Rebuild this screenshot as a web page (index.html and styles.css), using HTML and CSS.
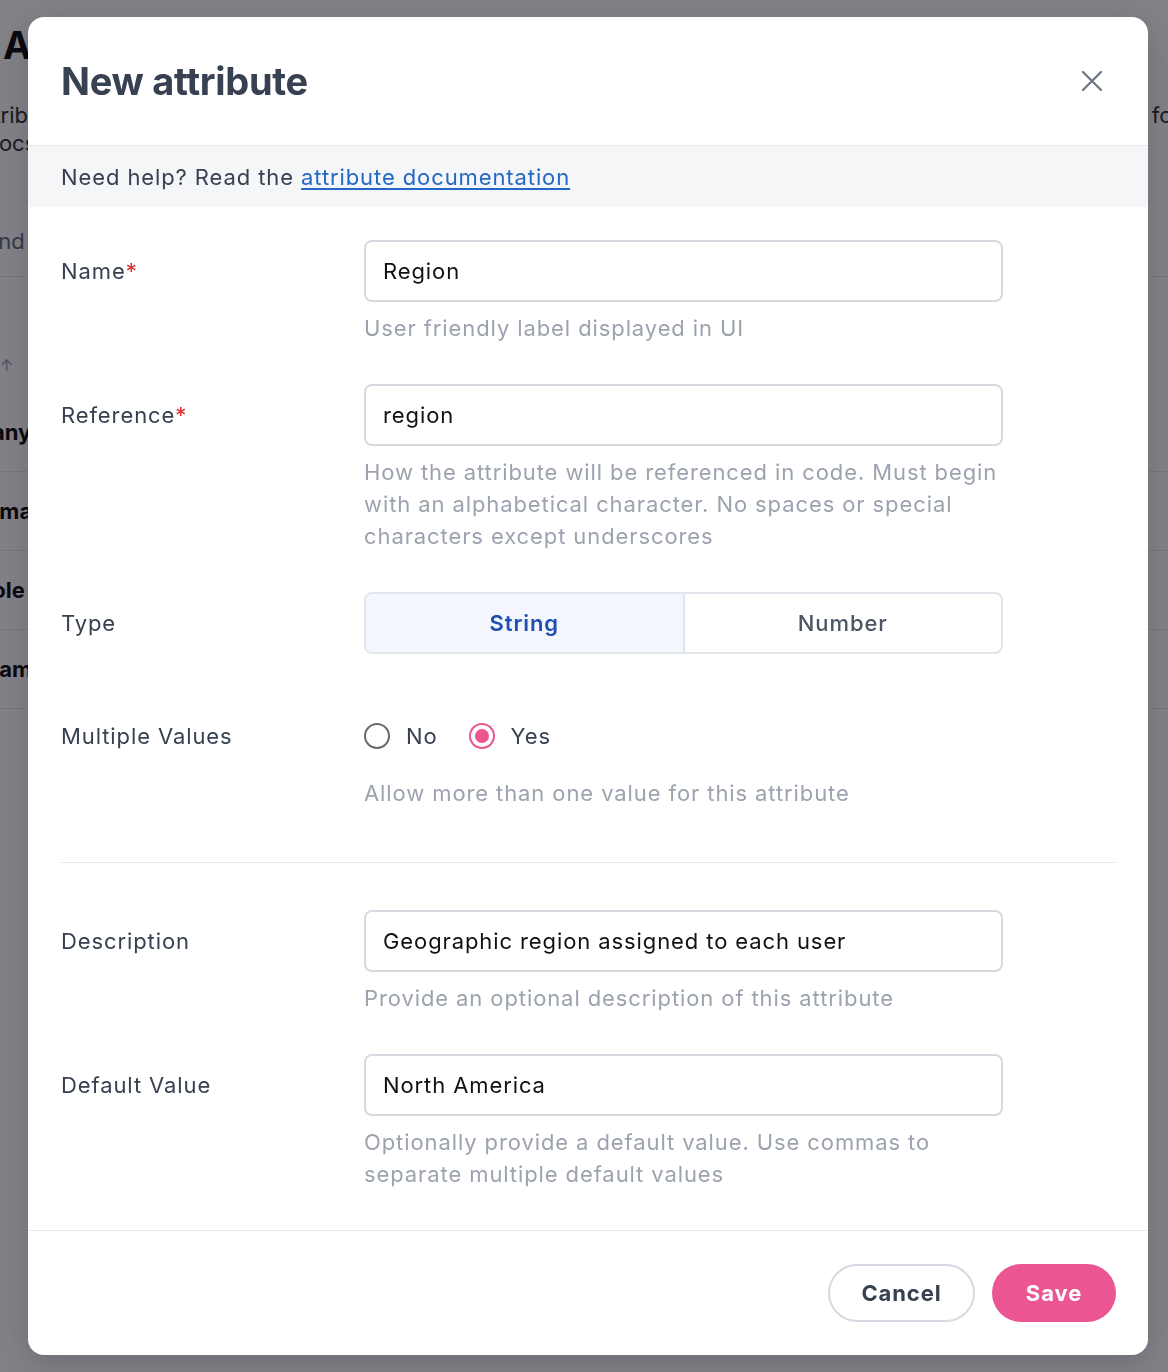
FILE: index.html
```html
<!DOCTYPE html>
<html lang="en">
<head>
    <meta charset="UTF-8">
    <meta name="viewport" content="width=device-width, initial-scale=1.0">
    <title>New attribute</title>
    <link rel="stylesheet" href="styles.css">
</head>
<body>
    <!-- Page behind the dialog -->
    <div class="page">
        <h1 class="page-title">Attributes</h1>
        <p class="page-intro">Attributes describe the users of your workspace and can be used to segment, target and personalise the product for each of them, from onboarding to</p>
        <p class="page-intro second">Docs and examples are available in the help centre for you to read</p>
        <div class="page-search"><span>Find an attribute</span></div>
        <div class="page-sort">↑</div>
        <div class="page-row company"><span>Company</span></div>
        <div class="page-row email"><span>Email</span></div>
        <div class="page-row role"><span>Role</span></div>
        <div class="page-row team"><span>Team</span></div>
    </div>

    <div class="overlay">
        <div class="modal">
            <header class="modal-header">
                <h2>New attribute</h2>
                <button class="close-btn" aria-label="Close">
                    <svg width="22" height="22" viewBox="0 0 22 22" fill="none" stroke="#6b7280" stroke-width="2.2" stroke-linecap="round">
                        <path d="M2 2 L20 20 M20 2 L2 20"/>
                    </svg>
                </button>
            </header>

            <div class="modal-help">
                <span>Need help? Read the <a href="#">attribute documentation</a></span>
            </div>

            <div class="modal-body">
                <div class="field">
                    <label class="field-label" for="name">Name<span class="req">*</span></label>
                    <div class="field-control">
                        <input class="text-input" id="name" type="text" value="Region">
                        <p class="field-help">User friendly label displayed in UI</p>
                    </div>
                </div>

                <div class="field">
                    <label class="field-label" for="reference">Reference<span class="req">*</span></label>
                    <div class="field-control">
                        <input class="text-input" id="reference" type="text" value="region">
                        <p class="field-help">How the attribute will be referenced in code. Must begin with an alphabetical character. No spaces or special characters except underscores</p>
                    </div>
                </div>

                <div class="field field-type">
                    <label class="field-label">Type</label>
                    <div class="field-control">
                        <div class="segmented">
                            <div class="segment active">String</div>
                            <div class="segment">Number</div>
                        </div>
                    </div>
                </div>

                <div class="field">
                    <label class="field-label">Multiple Values</label>
                    <div class="field-control">
                        <div class="radio-group">
                            <label class="radio"><span class="radio-dot"></span>No</label>
                            <label class="radio checked"><span class="radio-dot"></span>Yes</label>
                        </div>
                        <p class="field-help">Allow more than one value for this attribute</p>
                    </div>
                </div>

                <hr class="divider">

                <div class="field">
                    <label class="field-label" for="description">Description</label>
                    <div class="field-control">
                        <input class="text-input" id="description" type="text" value="Geographic region assigned to each user">
                        <p class="field-help">Provide an optional description of this attribute</p>
                    </div>
                </div>

                <div class="field last">
                    <label class="field-label" for="default">Default Value</label>
                    <div class="field-control">
                        <input class="text-input" id="default" type="text" value="North America">
                        <p class="field-help">Optionally provide a default value. Use commas to separate multiple default values</p>
                    </div>
                </div>
            </div>

            <footer class="modal-footer">
                <button class="btn btn-outline">Cancel</button>
                <button class="btn btn-primary">Save</button>
            </footer>
        </div>
    </div>
</body>
</html>
```

FILE: styles.css
```css
:root {
    --text: #374151;
    --muted: #9ca3af;
    --border: #d5d9e0;
    --pink: #ea5592;
    --blue: #1f4fb3;
    --link: #2368c4;
}

* {
    box-sizing: border-box;
    font-family: Inter, 'Noto Sans', sans-serif;
}

body {
    margin: 0;
    padding: 0;
    background: #ffffff;
    color: var(--text);
    overflow: hidden;
}

/* page behind */
.page {
    height: 1372px;
    padding-top: 20px;
    color: #111;
}

.page-title {
    margin: 0 0 0 3px;
    font-size: 38px;
    font-weight: 700;
    line-height: 50px;
}

.page-intro {
    margin: 0;
    font-size: 22px;
    line-height: 28px;
    color: #333;
    white-space: nowrap;
    margin-left: -28px;
}

.page-intro:first-of-type {
    margin-top: 31px;
}

.page-intro.second {
    margin-left: -17px;
}

.page-search {
    margin-top: 48px;
    height: 72px;
    border-bottom: 1px solid #e5e7eb;
    font-size: 22px;
    color: #6b7280;
    display: flex;
    align-items: center;
}

.page-search span {
    margin-left: -20px;
}

.page-sort {
    margin-top: 80px;
    height: 36px;
    font-size: 16px;
    line-height: 16px;
    color: #9ca3af;
}

.page-row {
    height: 79px;
    border-bottom: 1px solid #e5e7eb;
    font-size: 22px;
    font-weight: 700;
    display: flex;
    align-items: center;
}

.page-row.company span { margin-left: -72px; }
.page-row.email span { margin-left: -14px; }
.page-row.role span { margin-left: -22px; }
.page-row.team span { margin-left: -27px; }

/* dialog */
.overlay {
    position: fixed;
    inset: 0;
    background: rgba(4, 4, 16, 0.5);
    padding: 17px 0 0 28px;
}

.modal {
    width: 1120px;
    background: white;
    border-radius: 16px;
    overflow: hidden;
    box-shadow: 0 10px 30px rgba(0,0,0,0.15);
    letter-spacing: 0.9px;
}

.modal-header {
    height: 129px;
    display: flex;
    align-items: center;
    justify-content: space-between;
    padding: 0 32px 0 33px;
    border-bottom: 1px solid #e5e7eb;
}

.modal-header h2 {
    margin: 0;
    font-size: 38px;
    font-weight: 700;
    color: var(--text);
    letter-spacing: -0.3px;
}

.close-btn {
    width: 48px;
    height: 48px;
    border: none;
    background: none;
    padding: 0;
    display: flex;
    align-items: center;
    justify-content: center;
    cursor: pointer;
}

.modal-help {
    height: 61px;
    background: #f5f6f8;
    padding: 0 33px;
    display: flex;
    align-items: center;
    font-size: 22px;
    color: var(--text);
}

.modal-help a {
    color: var(--link);
    text-decoration: underline;
    text-underline-offset: 3px;
}

.modal-body {
    padding: 33px 32px 40px 33px;
}

.field {
    display: grid;
    grid-template-columns: 303px 639px;
    margin-bottom: 40px;
}

.field.field-type {
    margin-bottom: 51px;
}

.field.last {
    margin-bottom: 0;
}

.field-label {
    height: 62px;
    display: flex;
    align-items: center;
    font-size: 22px;
    color: var(--text);
}

.req {
    color: #dc2626;
}

.text-input {
    width: 100%;
    height: 62px;
    border: 2px solid var(--border);
    border-radius: 8px;
    padding: 0 17px;
    font-size: 22px;
    letter-spacing: 0.9px;
    color: #111;
    outline: none;
}

.field-help {
    margin: 10px 0 0;
    font-size: 22px;
    line-height: 32px;
    color: var(--muted);
}

.segmented {
    display: flex;
    height: 62px;
    border: 2px solid #e1e5ec;
    border-radius: 8px;
    overflow: hidden;
}

.segment {
    flex: 1;
    display: flex;
    align-items: center;
    justify-content: center;
    font-size: 22px;
    font-weight: 500;
    color: #4b5563;
}

.segment.active {
    background: #f3f6fc;
    color: var(--blue);
    font-weight: 600;
    border-right: 2px solid #e1e5ec;
}

.radio-group {
    height: 62px;
    display: flex;
    align-items: center;
    gap: 31px;
}

.radio {
    display: flex;
    align-items: center;
    gap: 16px;
    font-size: 22px;
    color: var(--text);
}

.radio-dot {
    width: 26px;
    height: 26px;
    border-radius: 50%;
    border: 2px solid #6b6b6b;
    display: flex;
    align-items: center;
    justify-content: center;
}

.radio.checked .radio-dot {
    border-color: var(--pink);
}

.radio.checked .radio-dot::after {
    content: "";
    width: 14px;
    height: 14px;
    border-radius: 50%;
    background: var(--pink);
}

.divider {
    border: none;
    border-top: 1px solid #e5e7eb;
    margin: 53px 0 47px;
}

.modal-footer {
    border-top: 1px solid #e5e7eb;
    padding: 33px 32px;
    display: flex;
    justify-content: flex-end;
    gap: 17px;
}

.btn {
    height: 58px;
    border-radius: 29px;
    font-size: 22px;
    font-weight: 700;
    letter-spacing: 0.9px;
    cursor: pointer;
}

.btn-outline {
    width: 147px;
    background: white;
    border: 2px solid #d5dae3;
    color: var(--text);
}

.btn-primary {
    width: 124px;
    background: var(--pink);
    border: none;
    color: white;
}
```
